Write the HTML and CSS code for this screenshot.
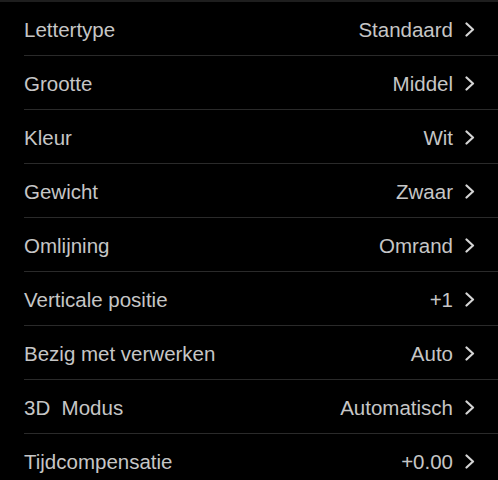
FILE: index.html
```html
<!DOCTYPE html>
<html lang="nl">
<head>
  <meta charset="UTF-8" />
  <meta name="viewport" content="width=device-width, initial-scale=1.0"/>
  <title>Ondertitels</title>
  <link rel="stylesheet" href="styles.css">
</head>
<body>

  <div class="settings-list">
    <div class="row"><span class="label">Lettertype</span><span class="value">Standaard</span><svg class="chevron" viewBox="0 0 10 15"><path d="M1.5 1.5 L8 7.5 L1.5 13.5"/></svg></div>
    <div class="row"><span class="label">Grootte</span><span class="value">Middel</span><svg class="chevron" viewBox="0 0 10 15"><path d="M1.5 1.5 L8 7.5 L1.5 13.5"/></svg></div>
    <div class="row"><span class="label">Kleur</span><span class="value">Wit</span><svg class="chevron" viewBox="0 0 10 15"><path d="M1.5 1.5 L8 7.5 L1.5 13.5"/></svg></div>
    <div class="row"><span class="label">Gewicht</span><span class="value">Zwaar</span><svg class="chevron" viewBox="0 0 10 15"><path d="M1.5 1.5 L8 7.5 L1.5 13.5"/></svg></div>
    <div class="row"><span class="label">Omlijning</span><span class="value">Omrand</span><svg class="chevron" viewBox="0 0 10 15"><path d="M1.5 1.5 L8 7.5 L1.5 13.5"/></svg></div>
    <div class="row"><span class="label">Verticale positie</span><span class="value">+1</span><svg class="chevron" viewBox="0 0 10 15"><path d="M1.5 1.5 L8 7.5 L1.5 13.5"/></svg></div>
    <div class="row"><span class="label">Bezig met verwerken</span><span class="value">Auto</span><svg class="chevron" viewBox="0 0 10 15"><path d="M1.5 1.5 L8 7.5 L1.5 13.5"/></svg></div>
    <div class="row"><span class="label">3D&nbsp; Modus</span><span class="value">Automatisch</span><svg class="chevron" viewBox="0 0 10 15"><path d="M1.5 1.5 L8 7.5 L1.5 13.5"/></svg></div>
    <div class="row"><span class="label">Tijdcompensatie</span><span class="value">+0.00</span><svg class="chevron" viewBox="0 0 10 15"><path d="M1.5 1.5 L8 7.5 L1.5 13.5"/></svg></div>
  </div>

</body>
</html>
```

FILE: styles.css
```css
body {
  margin: 0;
  background-color: #000;
  font-family: 'Liberation Sans', Arial, sans-serif;
  color: #c6c6c6;
  overflow: hidden;
}
.settings-list {
  border-top: 2px solid #1e1e1e;
  padding-left: 24px;
}
.row {
  display: flex;
  align-items: center;
  height: 51px;
  padding-top: 2px;
  padding-right: 23px;
  border-bottom: 1px solid #2a2a2a;
  font-size: 20.5px;
}
.label {
  flex: 1;
}
.value {
  margin-right: 12px;
}
.chevron {
  width: 10px;
  height: 15px;
  margin-top: -1px;
  fill: none;
  stroke: #d4d4d4;
  stroke-width: 2.2;
  stroke-linecap: round;
  stroke-linejoin: round;
}
```
